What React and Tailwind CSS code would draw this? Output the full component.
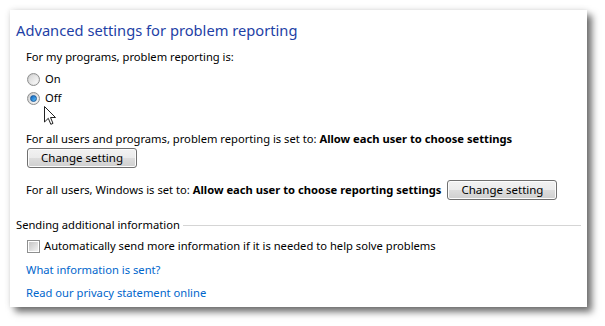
import React from 'react';

const font = { fontFamily: '"Segoe UI", "Noto Sans", "Open Sans", sans-serif' };

const Radio = ({ checked }) => (
  <span className="flex items-center justify-center w-[13px] h-[13px] rounded-full border border-[#8e8f8f] bg-gradient-to-br from-[#c9c9c9] to-[#f2f2f2]">
    <span className="w-[9px] h-[9px] rounded-full bg-gradient-to-br from-[#d6d6d6] to-[#fbfbfb] flex items-center justify-center">
      {checked && (
        <span className="w-[7px] h-[7px] rounded-full bg-gradient-to-br from-[#0b5fc0] to-[#5cc0f4] border border-[#1b5a9a]"></span>
      )}
    </span>
  </span>
);

const Checkbox = () => (
  <span className="flex items-center justify-center w-[13px] h-[13px] border border-[#8e8f8f] bg-white">
    <span className="w-[9px] h-[9px] bg-gradient-to-br from-[#c6c6c6] to-[#f2f2f2]"></span>
  </span>
);

const Button = ({ children }) => (
  <button className="shrink-0 w-[110px] h-[20px] rounded-[3px] border border-[#707070] bg-[linear-gradient(to_bottom,#f2f2f2_0%,#ebebeb_50%,#dddddd_50%,#cfcfcf_100%)] shadow-[inset_0_0_0_1px_#fcfcfc] text-[11.5px] text-black leading-[18px] flex items-center justify-center">
    {children}
  </button>
);

const Cursor = () => (
  <svg className="absolute left-[34px] top-[96px]" width="13" height="20" viewBox="0 0 13 20">
    <path
      d="M0.5 0.5 L0.5 16 L4.3 12.3 L6.8 18.3 L9 17.4 L6.5 11.5 L11.5 11.5 Z"
      fill="#fff"
      stroke="#222"
      strokeWidth="1"
    />
  </svg>
);

export default function App() {
  return (
    <div className="w-[605px] h-[326px] bg-white pt-[10px] pl-[10px]" style={font}>
      <div className="relative w-[577px] h-[297px] bg-white pt-[10px] pl-[6px] shadow-[5px_5px_7px_rgba(0,0,0,0.55),0_0_6px_rgba(0,0,0,0.12)] text-[11.2px] text-black">
        <h1 className="h-[20px] leading-[20px] text-[14.7px] text-[#1e3fa6] whitespace-nowrap">
          Advanced settings for problem reporting
        </h1>

        <div className="pl-[10px]">
          <p className="mt-[9px] h-[16px] leading-[16px]">For my programs, problem reporting is:</p>

          <div className="mt-[5px] h-[19px] flex items-center gap-[5px] pl-[1px]">
            <Radio />
            <span>On</span>
          </div>
          <div className="h-[19px] flex items-center gap-[5px] pl-[1px]">
            <Radio checked />
            <span>Off</span>
          </div>

          <p className="mt-[23px] h-[16px] leading-[16px] whitespace-nowrap">
            For all users and programs, problem reporting is set to:{' '}
            <span className="font-bold">Allow each user to choose settings</span>
          </p>
          <div className="mt-[1px] pl-[1px]">
            <Button>Change setting</Button>
          </div>

          <div className="mt-[12px] h-[20px] flex items-center gap-[6px]">
            <span className="whitespace-nowrap">
              For all users, Windows is set to:{' '}
              <span className="font-bold">Allow each user to choose reporting settings</span>
            </span>
            <Button>Change setting</Button>
          </div>
        </div>

        <div className="mt-[17px] h-[16px] flex items-center pr-[6px]">
          <span className="leading-[16px] whitespace-nowrap">Sending additional information</span>
          <span className="flex-1 h-px bg-[#d5d5d5] ml-[3px]"></span>
        </div>

        <div className="pl-[10px]">
          <div className="mt-[5px] h-[16px] flex items-center gap-[4px] pl-[1px]">
            <Checkbox />
            <span className="whitespace-nowrap">Automatically send more information if it is needed to help solve problems</span>
          </div>
          <p className="mt-[8px] h-[16px] leading-[16px] text-[#0066cc]">What information is sent?</p>
          <p className="mt-[7px] h-[16px] leading-[16px] text-[#0066cc]">Read our privacy statement online</p>
        </div>

        <Cursor />
      </div>
    </div>
  );
}
